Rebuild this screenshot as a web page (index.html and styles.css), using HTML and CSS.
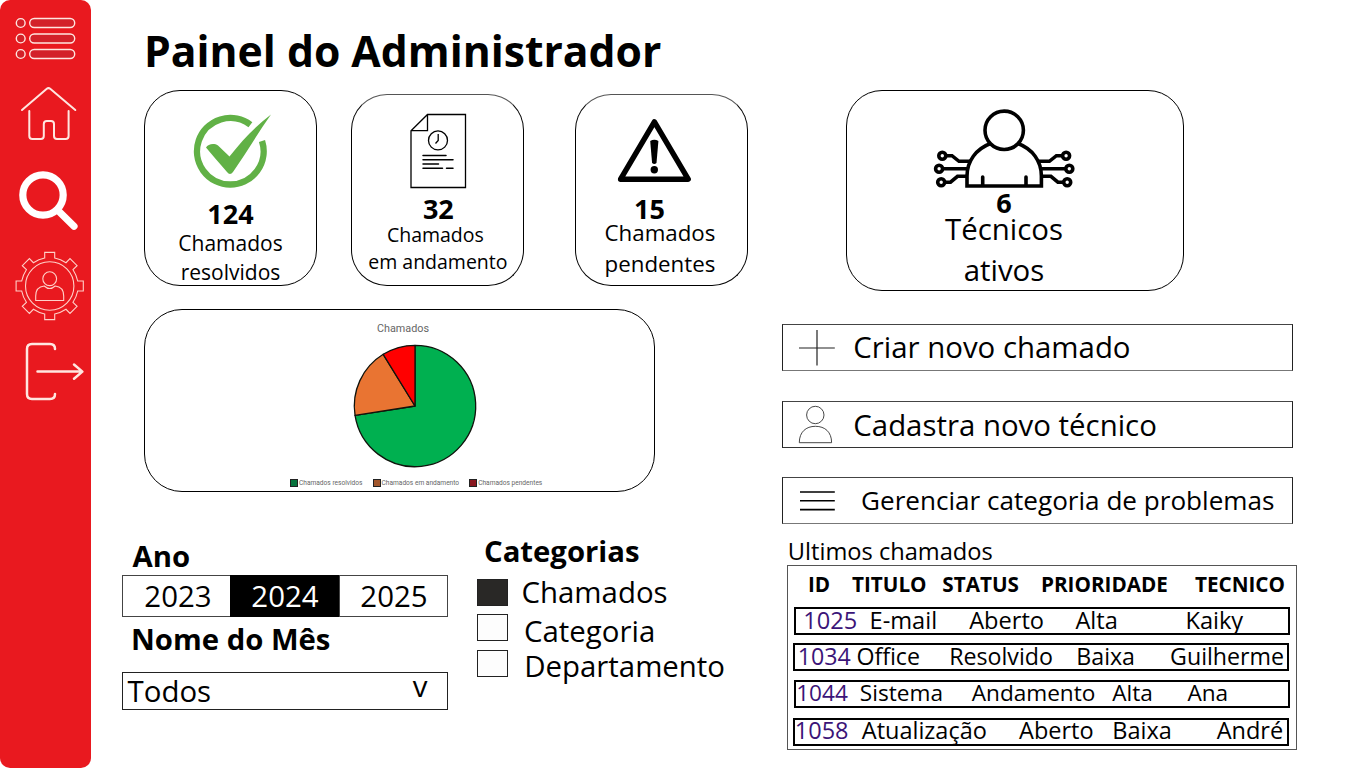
FILE: index.html
```html
<!DOCTYPE html>
<html lang="pt-BR">
<head>
<meta charset="utf-8">
<title>Painel do Administrador</title>
<link rel="stylesheet" href="styles.css">
</head>
<body>
<nav class="sidebar">
  <a class="nav-item"><svg width="91" height="75" viewBox="0 0 91 75"><g class="line-menu"><circle cx="20.7" cy="23" r="4.4"/><circle cx="20.7" cy="38.5" r="4.4"/><circle cx="20.7" cy="54" r="4.4"/><rect x="29.7" y="18.5" width="45" height="9" rx="4.5"/><rect x="29.7" y="34" width="45" height="9" rx="4.5"/><rect x="29.7" y="49.5" width="45" height="9" rx="4.5"/></g></svg></a>
  <a class="nav-item"><svg width="91" height="80" viewBox="0 75 91 80"><path class="line-home" d="M22 110 L46.8 88.8 Q48.5 87.4 50.2 88.8 L75.3 110 M29.3 111 V136 Q29.3 139 32.3 139 H40.8 Q43.8 139 43.8 136 V124 Q43.8 121 46.8 121 H51 Q54 121 54 124 V136 Q54 139 57 139 H65.6 Q68.6 139 68.6 136 V111"/></svg></a>
  <a class="nav-item"><svg width="91" height="85" viewBox="0 155 91 85"><g class="line-search"><circle cx="43" cy="195" r="20.2"/><path d="M58 210.5 L74 226.3"/></g></svg></a>
  <a class="nav-item"><svg width="91" height="88" viewBox="0 240 91 88"><g class="line-gear" transform="translate(49.7 286)"><circle r="24.2"/><path d="M-5 -28 V-33.6 H5 V-28 Q11 -26.8 16.3 -23.3 L20.3 -27.4 L27.4 -20.3 L23.3 -16.3 Q26.8 -11 28 -5 H33.6 V5 H28 Q26.8 11 23.3 16.3 L27.4 20.3 L20.3 27.4 L16.3 23.3 Q11 26.8 5 28 V33.6 H-5 V28 Q-11 26.8 -16.3 23.3 L-20.3 27.4 L-27.4 20.3 L-23.3 16.3 Q-26.8 11 -28 5 H-33.6 V-5 H-28 Q-26.8 -11 -23.3 -16.3 L-27.4 -20.3 L-20.3 -27.4 L-16.3 -23.3 Q-11 -26.8 -5 -28Z"/><circle cy="-7.3" r="6.9"/><path d="M-14 14.5 V10 C-14 4 -10.5 .5 -5.5 0 Q0 5 5.5 0 C10.5 .5 14 4 14 10 V14.5Z"/></g></svg></a>
  <a class="nav-item"><svg width="91" height="87" viewBox="0 328 91 87"><path class="line-exit" d="M55 349 Q55 344 50 344 H32 Q27 344 27 349 V394 Q27 399 32 399 H50 Q55 399 55 394 M37.5 371.6 H82 M74 364.5 L82.4 371.6 L74 378.7"/></svg></a>
</nav>

<main class="page">
  <h1 class="title">Painel do Administrador</h1>

  <section class="cards">
    <article class="card card-done">
      <svg class="card-icon" width="171" height="108" viewBox="145 91 171 108"><path fill="none" stroke="#61b146" stroke-width="6.4" d="M262 141 A33.3 33.3 0 1 1 250.4 124.7"/><path fill="#61b146" d="M206 147.5 C208 144 214 143 218 145.5 L229.5 156.5 C243 139 256 126 271 114.5 C258 133 246 153 233 172 Q230 176 227 172 C220 164 212 155 206 147.5Z"/></svg>
      <strong class="count">124</strong>
      <p class="label">Chamados<br>resolvidos</p>
    </article>
    <article class="card card-progress">
      <svg class="card-icon" width="171" height="99" viewBox="352 95 171 99"><g fill="none" stroke="#000" stroke-width="1.3"><path d="M427.5 114.5 H465.5 V187.5 H411 V130.7 Z M427.5 114.5 V130.7 H411"/><circle cx="438" cy="140.4" r="9.5"/><path d="M438.2 134 V140.5 L435.5 143.5"/><path stroke-width="1.5" stroke-linecap="round" d="M423 155.4 H446 M423 159.7 H453 M423 164 H438.5 M423 168.3 H442.5 M446.5 168.3 H453"/></g></svg>
      <strong class="count">32</strong>
      <p class="label"><span class="first">Chamados</span><br>em andamento</p>
    </article>
    <article class="card card-pending">
      <svg class="card-icon" width="171" height="99" viewBox="576 95 171 99"><path fill="none" stroke="#000" stroke-width="5.4" stroke-linejoin="round" d="M654.4 121.8 L688.2 179.2 H620.6 Z"/><path d="M650.2 141 Q654.3 138.5 658.4 141 L656.5 163 Q654.3 165 652.1 163Z"/><circle cx="654.3" cy="169.7" r="3.7"/></svg>
      <strong class="count">15</strong>
      <p class="label">Chamados<br>pendentes</p>
    </article>
    <article class="card card-staff">
      <svg class="card-icon" width="336" height="97" viewBox="847 91 336 97"><g fill="none" stroke="#000" stroke-width="3.6"><circle cx="1004.2" cy="130.3" r="19.2"/><path d="M990.5 143.5 C976 149 967 161 967 176 V186 H1041.4 V176 C1041.4 161 1032.5 149 1018 143.5"/><path stroke-linecap="round" d="M982.7 177 V185 M1026 177 V185"/><g id="wires"><circle cx="942.3" cy="155.7" r="3.5"/><circle cx="939.1" cy="168.7" r="3.5"/><circle cx="941.2" cy="182.2" r="3.5"/><path d="M946 155.7 H952 L959 161.3 H971 M943 168.7 H967 M945 182.2 H950.5 L957.5 176.3 H967"/></g><use href="#wires" transform="matrix(-1 0 0 1 2008.4 0)"/></g></svg>
      <strong class="count">6</strong>
      <p class="label">Técnicos<br>ativos</p>
    </article>
  </section>

  <div class="lower">
    <div class="left">
      <figure class="chart">
        <figcaption class="chart-title">Chamados</figcaption>
        <svg class="pie" width="130" height="130" viewBox="-65 -65 130 130"><g stroke="#10130c" stroke-width="1.3" stroke-linejoin="round"><path fill="#00b050" d="M0 0 V-60.7 A60.7 60.7 0 1 1 -59.96 9.44Z"/><path fill="#e97432" d="M0 0 L-59.96 9.44 A60.7 60.7 0 0 1 -31.8 -51.7Z"/><path fill="#f00" d="M0 0 L-31.8 -51.7 A60.7 60.7 0 0 1 0 -60.7Z"/></g></svg>
        <ul class="legend">
          <li class="key key-done">Chamados resolvidos</li>
          <li class="key key-progress">Chamados em andamento</li>
          <li class="key key-pending">Chamados pendentes</li>
        </ul>
      </figure>

      <div class="filters">
        <section class="period">
          <h2 class="heading">Ano</h2>
          <div class="years"><span class="year">2023</span><span class="year year-active">2024</span><span class="year">2025</span></div>
          <h2 class="heading heading-month">Nome do Mês</h2>
          <div class="select"><span>Todos</span><span class="caret">v</span></div>
        </section>
        <section class="categories">
          <h2 class="heading">Categorias</h2>
          <div class="option option-a"><i class="box box-on"></i><span>Chamados</span></div>
          <div class="option option-b"><i class="box"></i><span>Categoria</span></div>
          <div class="option option-c"><i class="box"></i><span>Departamento</span></div>
        </section>
      </div>
    </div>

    <div class="right">
      <div class="actions">
        <a class="action"><svg width="70" height="45" viewBox="783 325 70 45"><path fill="none" stroke="#222" stroke-width="1.2" d="M799 348 H834.8 M817 330 V365.5"/></svg><span>Criar novo chamado</span></a>
        <a class="action action-user"><svg width="70" height="45" viewBox="783 402 70 45"><g fill="none" stroke="#333" stroke-width=".9"><circle cx="815.3" cy="415" r="8.7"/><path d="M799.3 442.7 C799.3 432 806 426.3 815.4 426.3 C825 426.3 831.6 432 831.6 442.7Z"/></g></svg><span>Cadastra novo técnico</span></a>
        <a class="action action-list"><svg width="70" height="45" viewBox="783 478 70 45"><path stroke="#000" stroke-width="1.6" d="M800 492 H834.8 M800 500.8 H834.8 M800 509.6 H834.8"/></svg><span>Gerenciar categoria de problemas</span></a>
      </div>

      <h2 class="table-title">Ultimos chamados</h2>
      <div class="table">
        <div class="head"><b>ID</b><b>TITULO</b><b>STATUS</b><b>PRIORIDADE</b><b>TECNICO</b></div>
        <div class="row row-1"><a>1025</a><span>E-mail</span><span>Aberto</span><span>Alta</span><span>Kaiky</span></div>
        <div class="row row-2"><a>1034</a><span>Office</span><span>Resolvido</span><span>Baixa</span><span>Guilherme</span></div>
        <div class="row row-3"><a>1044</a><span>Sistema</span><span>Andamento</span><span>Alta</span><span>Ana</span></div>
        <div class="row row-4"><a>1058</a><span>Atualização</span><span>Aberto</span><span>Baixa</span><span>André</span></div>
      </div>
    </div>
  </div>
</main>
</body>
</html>
```
FILE: styles.css
```css
* { box-sizing: border-box; }
body {
  margin: 0;
  display: flex;
  width: 1366px;
  height: 768px;
  overflow: hidden;
  background: #fff;
  color: #000;
  font-family: "Open Sans", "Noto Sans", sans-serif;
}
svg { display: block; flex: none; }
h1, h2, p, figure, ul { margin: 0; padding: 0; }

/* Sidebar */
.sidebar { flex: none; width: 91.4px; height: 768px; border-radius: 10px; background: #e9191f; }
.nav-item { display: block; }
.nav-item svg { fill: none; stroke: #ffe6e0; }
.line-menu { stroke-width: 1.4; fill: #d32129; }
.line-home { stroke-width: 2; stroke-linecap: round; stroke-linejoin: round; }
.line-search { stroke: #fff; stroke-width: 7.2; stroke-linecap: round; }
.line-gear { stroke: #ffd0c8; stroke-width: 1.1; }
.line-exit { stroke-width: 2.5; stroke-linecap: round; stroke-linejoin: round; }

.page { flex: none; width: 1274px; padding-top: 21px; }
.title { margin-left: 52.6px; height: 69px; font-size: 42.66px; line-height: 59px; white-space: nowrap; }

/* Summary cards */
.cards { display: flex; height: 201px; padding-left: 52.6px; }
.card { flex: none; width: 173px; height: 196px; border: 1px solid #000; border-radius: 36px; text-align: center; white-space: nowrap; }
.count { display: block; font-size: 27px; line-height: 30px; margin-bottom: -2px; }
.card-progress, .card-pending { margin-top: 3.6px; height: 192px; border-top-color: #555; }
.card-progress { margin-left: 34.4px; }
.card-pending { margin-left: 50.6px; }
.card-staff { margin-left: 98px; width: 338px; height: 201px; }
.card-done .label { margin-top: 2px; font-size: 21px; line-height: 29px; }
.card-progress .label { margin-top: -3px; font-size: 19.5px; line-height: 27px; }
.card-progress .first { padding-right: 5px; }
.card-progress .count { padding-left: 1px; }
.card-pending .count { padding-right: 24px; }
.card-pending .label { margin-top: -7px; padding-right: 3px; font-size: 22.3px; line-height: 31px; }
.card-staff .count { padding-right: 22px; }
.card-staff .label { margin-top: -9px; padding-right: 22px; font-size: 29.4px; line-height: 41px; }

.lower { display: flex; }
.left { flex: none; width: 660px; padding: 18px 0 0 30.6px; }

/* Chart */
.chart { margin-left: 22px; width: 511px; height: 183px; padding-top: 11px; border: 1px solid #000; border-radius: 38px; font-family: Roboto, sans-serif; color: #666; }
.chart-title { padding-left: 7px; font-size: 10.8px; line-height: 16px; text-align: center; }
.pie { margin: 4px 0 0 205px; }
.legend { display: flex; gap: 10px; padding: 7px 0 0 145px; list-style: none; font-size: 6.6px; line-height: 10px; white-space: nowrap; }
.key { display: flex; align-items: center; gap: 1px; }
.key::before { content: ""; width: 6px; height: 6px; border: 1px solid #222; background: #08733c; }
.key-progress::before { background: #a2572c; }
.key-pending::before { background: #8a1820; }

/* Filters */
.filters { display: flex; font-size: 29.4px; }
.heading { height: 40px; font-size: 29.3px; line-height: 40px; white-space: nowrap; }
.period { width: 326px; padding-top: 44px; }
.period .heading { margin: 0 0 -1px 10.5px; }
.years { display: grid; grid-template-columns: 107px 109px 108px; height: 42px; border: 1px solid #444; }
.year { padding-left: 1px; line-height: 40px; text-align: center; }
.year:first-child { padding-left: 3px; }
.year-active { margin: -1px 0; line-height: 42px; background: #000; color: #fff; }
.year-active + .year { border-left: 1px solid #444; }
.period .heading-month { margin: 2px 0 13px 9px; }
.select { display: flex; justify-content: space-between; height: 38px; padding: 0 19.5px 0 4.6px; border: 1px solid #222; line-height: 36px; }
.caret { line-height: 26px; }
.categories { padding: 39px 0 0 29px; }
.categories .heading { padding-left: 7px; }
.option { display: flex; line-height: 43px; white-space: nowrap; }
.box { flex: none; width: 31px; height: 27px; margin-right: 13.5px; border: 1px solid #222; background: #fdfdfd; }
.box-on { background: #292826; }
.option-a { height: 39px; }
.option-a .box { margin-top: 8px; }
.option-b { height: 35px; }
.option-b .box { margin-top: 4px; margin-right: 16px; }
.option-c .box { margin-top: 5px; margin-right: 16.2px; }

/* Actions */
.right { width: 516px; margin-left: 30.4px; padding-top: 33px; }
.actions { width: 511px; }
.action { display: flex; height: 47px; margin-bottom: 30px; border: 1px solid #222; border-top-color: #444; border-bottom-color: #777; font-size: 29.4px; line-height: 44px; white-space: nowrap; }
.action span { padding-left: .5px; }
.action-user { line-height: 46px; margin-bottom: 29px; border-bottom-color: #333; }
.action-list { margin-bottom: 0; font-size: 26.1px; line-height: 44px; }
.action-list span { padding-left: 8.3px; }

/* Latest tickets */
.table-title { margin: 11px 0 0 6px; font-size: 23.65px; font-weight: 400; line-height: 32px; height: 30px; }
.table { width: 510px; height: 185px; margin-left: 5px; margin-top: 0; padding: 4px 0 0 6px; border: 1px solid #555; white-space: nowrap; }
.head { display: grid; grid-template-columns: 44px 90.3px 98.7px 154px auto; height: 37px; padding-left: 14.2px; font-size: 20.7px; line-height: 28px; }
.row { display: grid; width: 496px; height: 28px; border: 2px solid #000; font-size: 23.6px; line-height: 22px; }
.row a { color: #3b1478; }
.row-1 { padding-left: 7.4px; grid-template-columns: 66.4px 99.6px 106.3px 110px auto; }
.row-2 { margin: 8px 0 9px -1px; padding-left: 3px; grid-template-columns: 58.6px 92.8px 127.1px 93.8px auto; font-size: 23.2px; }
.row-3 { padding-left: .4px; grid-template-columns: 63.7px 111.9px 140.4px 75.3px auto; font-size: 22.6px; line-height: 21px; }
.row-4 { margin: 10px 0 0 -1px; grid-template-columns: 67px 157.3px 93.2px 104.4px auto; font-size: 23.5px; line-height: 20px; }
```
